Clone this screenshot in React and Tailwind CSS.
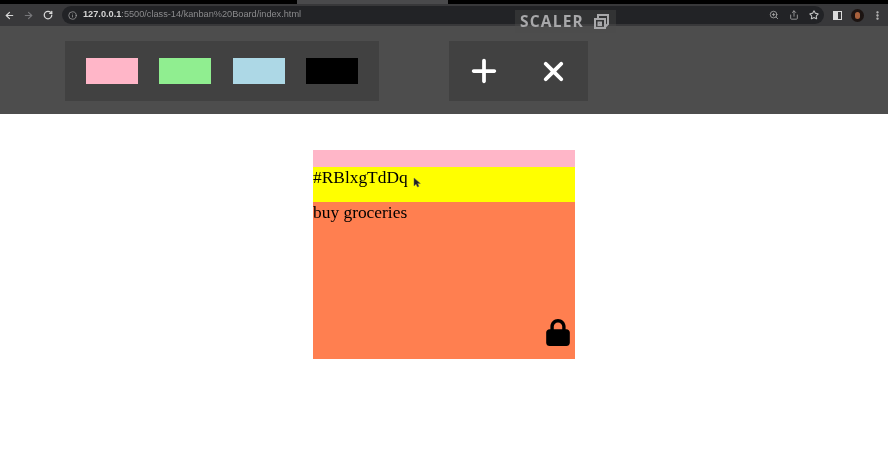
import { ArrowLeft, ArrowRight, RotateCw, Info, ZoomIn, Share, Star, EllipsisVertical } from 'lucide-react';
import { FaPlus, FaXmark, FaLock } from 'react-icons/fa6';

const swatches = ['bg-[#ffb6c8]', 'bg-[#90ee90]', 'bg-[#add8e6]', 'bg-black'];

function BrowserBar() {
    return (
        <div>
            <div className="flex h-[4px] bg-[#4a4a4c]">
                <div className="w-[297px] bg-black" />
                <div className="w-[151px]" />
                <div className="flex-1 bg-black" />
            </div>
            <div className="flex h-[22px] items-center bg-[#38383a] pl-[3px] pr-[4px]">
                <ArrowLeft className="ml-[1px] h-[11px] w-[11px] text-[#d8d8d8]" strokeWidth={2.5} />
                <ArrowRight className="ml-[8px] h-[11px] w-[11px] text-[#77777a]" strokeWidth={2.5} />
                <RotateCw className="ml-[9px] h-[10px] w-[10px] text-[#d8d8d8]" strokeWidth={3} />
                <div className="ml-[9px] flex h-[18px] w-[762px] items-center rounded-full bg-[#222326] pl-[6px]">
                    <Info className="h-[9px] w-[9px] text-[#a0a0a0]" />
                    <span className="ml-[6px] font-['Liberation_Sans',sans-serif] text-[9.2px] font-bold whitespace-nowrap text-[#d4d4d4]">
                        127.0.0.1<span className="font-normal text-[#8b8b8d]">:5500/class-14/kanban%20Board/index.html</span>
                    </span>
                    <div className="ml-auto flex items-center gap-[10px] pr-[5px]">
                        <ZoomIn className="h-[10px] w-[10px] text-[#a8a8a8]" />
                        <Share className="h-[10px] w-[10px] text-[#a8a8a8]" />
                        <Star className="h-[10px] w-[10px] text-[#c0c0c0]" strokeWidth={2.5} />
                    </div>
                </div>
                <div className="ml-[9px] flex h-[9px] w-[9px] justify-end border border-[#dcdcdc] bg-[#dcdcdc]">
                    <div className="h-full w-[3px] bg-[#38383a]" />
                </div>
                <div className="ml-[9px] flex h-[13px] w-[13px] items-center justify-center rounded-full bg-[#1c1412]">
                    <div className="h-[7px] w-[5px] rounded-full bg-[#a8603c]" />
                </div>
                <EllipsisVertical className="ml-[8px] h-[11px] w-[11px] text-[#c8c8c8]" strokeWidth={3} />
            </div>
        </div>
    );
}

export default function App() {
    return (
        <div className="relative h-[452px] w-[888px] overflow-hidden bg-white blur-[0.4px]">
            <BrowserBar />

            {/* watermark sits over the browser bar */}
            <div className="absolute top-[10px] left-[515px] flex h-[23px] items-center gap-[9px] bg-[#4a4a4c]/40 pl-[5px] pr-[6px]">
                <span className="font-['Open_Sans',sans-serif] text-[15.5px] font-bold tracking-[1.2px] text-[#a8a8aa]">SCALER</span>
                <svg width="17" height="17" viewBox="0 0 17 17" fill="none" stroke="#a8a8aa" strokeWidth="2">
                    <path d="M5 5V2h10v9l-3 3" />
                    <rect x="2" y="6" width="10" height="9" />
                    <rect x="5.5" y="9.5" width="2.5" height="2.5" />
                </svg>
            </div>

            <div className="flex h-[88px] items-center bg-[#4d4d4d] pt-[2px] pl-[65px]">
                <div className="flex h-[60px] w-[314px] items-center gap-[21.3px] bg-[#414141] pl-[21px]">
                    {swatches.map((color) => (
                        <div key={color} className={`h-[26px] w-[52px] ${color}`} />
                    ))}
                </div>
                <div className="ml-[70px] flex h-[60px] w-[139px] items-center bg-[#414141] text-white">
                    <FaPlus className="ml-[20px] h-[30px] w-[30px]" />
                    <FaXmark className="ml-[39px] h-[31px] w-[31px]" />
                </div>
            </div>

            <div className="ml-[313px] mt-[36px] flex h-[209px] w-[262px] flex-col font-['Liberation_Serif',serif] text-[17.4px] leading-[20px] text-black">
                <div className="h-[17px] bg-[#ffb6c8]" />
                <div className="h-[35px] bg-[#ffff00]">#RBlxgTdDq</div>
                <div className="relative flex-1 bg-[#ff7f50]">
                    buy groceries
                    <FaLock className="absolute right-[5px] bottom-[13px] h-[27px] w-[24px]" />
                </div>
            </div>

            {/* mouse cursor */}
            <svg className="absolute top-[177px] left-[413px]" width="8" height="12" viewBox="0 0 8 12">
                <path d="M1 1v8l2-2 1.5 3 1.5-.7L4.6 6.5H7.4z" fill="#222" stroke="#666" strokeWidth="0.5" />
            </svg>
        </div>
    );
}
